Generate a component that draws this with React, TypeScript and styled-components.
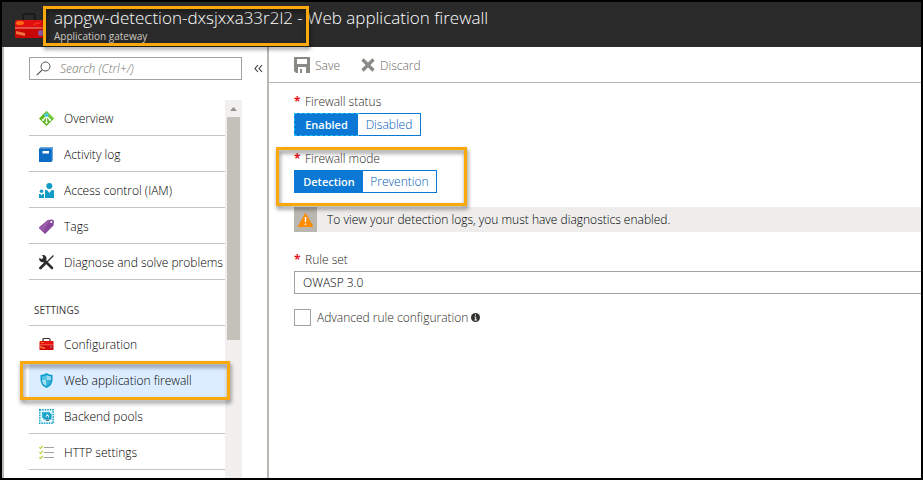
import React, { useState } from "react";
import styled, { createGlobalStyle, css } from "styled-components";

const GlobalStyle = createGlobalStyle`
  *, *::before, *::after { box-sizing: border-box; }
  body { margin: 0; background: #fff; }
  body, button, input, select {
    font-family: "Open Sans", "Noto Sans", sans-serif;
    font-size: 12px;
    font-weight: 300;
  }
`;

const Window = styled.div`
  display: flex;
  flex-direction: column;
  height: 100vh;
  border: 2px solid #000;
  background: #fff;
  color: #000;
  overflow: hidden;
`;

const Highlight = styled.div<{ $top: number; $right: number; $bottom: number; $left: number }>`
  position: absolute;
  top: ${(p) => p.$top}px;
  right: ${(p) => p.$right}px;
  bottom: ${(p) => p.$bottom}px;
  left: ${(p) => p.$left}px;
  border: 3px solid #faa80a;
  filter: drop-shadow(1px 3px 2px rgba(0, 0, 0, 0.5));
  pointer-events: none;
  z-index: 2;
`;

const Header = styled.header`
  display: flex;
  flex: none;
  gap: 10px;
  height: 45px;
  padding-left: 13px;
  background: #2a2a2a;
  color: #fff;
`;

const HeaderIcon = styled.svg`
  flex: none;
  width: 29px;
  height: 26px;
  margin-top: 10px;
`;

const Titles = styled.div`
  padding-top: 4px;
  white-space: nowrap;
`;

const Title = styled.h1`
  margin: 0;
  font-size: 17px;
  font-weight: 300;
  line-height: 24px;
`;

const ResourceName = styled.span`
  position: relative;
`;

const Subtitle = styled.p`
  margin: 0;
  color: #cbc8c0;
  font-size: 10px;
  font-weight: 400;
  line-height: 12px;
`;

const Body = styled.div`
  display: flex;
  flex: 1;
  min-height: 0;
`;

const Sidebar = styled.aside`
  display: flex;
  flex: none;
  flex-direction: column;
  width: 267px;
  border: solid #bab6b2;
  border-width: 0 2px;
  padding: 10px 0 0 25px;
`;

const SearchRow = styled.div`
  display: flex;
  align-items: center;
  gap: 12px;
  margin-bottom: 20px;
`;

const SearchBox = styled.label`
  display: flex;
  align-items: center;
  gap: 9px;
  width: 213px;
  height: 23px;
  padding-left: 6px;
  border: 1px solid #a3a19e;
`;

const SearchInput = styled.input`
  flex: 1;
  min-width: 0;
  border: 0;
  padding: 0;
  outline: 0;
  background: none;
  font-style: italic;
  &::placeholder { color: #75736c; opacity: 1; }
`;

const CollapseButton = styled.button`
  display: flex;
  border: 0;
  padding: 0;
  background: none;
`;

const NavArea = styled.div`
  display: flex;
  flex: 1;
  width: 213px;
  min-height: 0;
`;

const Nav = styled.nav`
  flex: 1;
  min-width: 0;
`;

const NavList = styled.ul`
  margin: 0;
  padding: 0;
  list-style: none;
`;

const NavItem = styled.li`
  position: relative;
`;

const NavLink = styled.a<{ $active?: boolean }>`
  display: flex;
  align-items: center;
  gap: 10px;
  height: 36px;
  padding: 2px 0 0 10px;
  border-bottom: 1px solid #c8c5bf;
  background: ${(p) => (p.$active ? "#dcedff" : "transparent")};
  color: inherit;
  text-decoration: none;
  white-space: nowrap;
  svg { flex: none; }
`;

const NavHeading = styled.h2`
  margin: 0;
  padding: 20px 0 5px 5px;
  border-bottom: 1px solid #c8c5bf;
  color: #3b3a36;
  font-size: 10px;
  font-weight: 400;
  line-height: 20px;
`;

const Scrollbar = styled.div`
  display: flex;
  flex: none;
  flex-direction: column;
  align-items: center;
  width: 17px;
  background: #f1f0ef;
`;

const ScrollArrow = styled.svg`
  flex: none;
  width: 17px;
  height: 17px;
`;

const ScrollThumb = styled.div`
  flex: 0 0 59%;
  width: 13px;
  background: #c4c1bb;
`;

const Main = styled.main`
  flex: 1;
  min-width: 0;
`;

const Toolbar = styled.div`
  display: flex;
  gap: 21px;
  height: 36px;
  padding: 1px 0 0 25px;
  border-bottom: 1px solid #b9b8ae;
`;

const ToolButton = styled.button`
  display: flex;
  align-items: center;
  gap: 5px;
  border: 0;
  padding: 0;
  background: none;
  color: #6b6963;
`;

const Form = styled.form`
  display: flex;
  flex-direction: column;
  align-items: flex-start;
  padding: 10px 0 0 25px;
`;

const Field = styled.div`
  position: relative;
  margin-bottom: 14px;
`;

const fieldLabel = css`
  display: block;
  color: #2b2924;
  line-height: 18px;
  margin-bottom: 2px;
`;

const Caption = styled.div`${fieldLabel}`;
const SelectLabel = styled.label`${fieldLabel}`;

const Star = styled.span`
  display: inline-block;
  width: 11px;
  color: #e8121c;
  font-weight: 700;
`;

const Segments = styled.div`
  display: flex;
  width: max-content;
  height: 23px;
  border: 1px solid #0a78d4;
`;

const Segment = styled.button<{ $on: boolean; $width: number; $dashed?: boolean }>`
  width: ${(p) => p.$width}px;
  border: 0;
  padding: 0;
  background: ${(p) => (p.$on ? "#0a78d4" : "#fff")};
  color: ${(p) => (p.$on ? "#fff" : "#005cb8")};
  font-size: ${(p) => (p.$on ? 11 : 12)}px;
  font-weight: ${(p) => (p.$on ? 600 : 300)};
  outline: ${(p) => (p.$dashed ? "1px dashed #1fc0f5" : "0")};
`;

const Alert = styled.div`
  display: flex;
  align-items: center;
  align-self: stretch;
  gap: 10px;
  height: 25px;
  margin-bottom: 19px;
  background: #eeedec;
`;

const AlertIcon = styled.span`
  display: flex;
  align-items: center;
  justify-content: center;
  width: 23px;
  height: 25px;
  background: #bab6b0;
`;

const SelectField = styled.div`
  align-self: stretch;
  margin-bottom: 15px;
`;

const Select = styled.select`
  display: block;
  width: 100%;
  height: 23px;
  border: 1px solid #a3a19e;
  border-right: 0;
  border-radius: 0;
  padding: 0 8px;
  background: #fff;
  color: #000;
  appearance: none;
`;

const CheckRow = styled.div`
  display: flex;
  align-items: center;
  color: #2b2924;
`;

const Checkbox = styled.input`
  width: 17px;
  height: 17px;
  margin: 0 6px 0 0;
  border: 1px solid #a3a19e;
  background: #fff;
  appearance: none;
  &:checked { background: #0a78d4; }
`;

const InfoIcon = styled.svg`
  margin-left: 3px;
`;

const Toolbox = () => (
  <svg width="15" height="15" viewBox="0 0 15 15" aria-hidden="true">
    <path d="M4 5V2.500Q4 1.500 5 1.500H10Q11 1.500 11 2.500V5" fill="none" stroke="#3a3030" strokeWidth="1.200" />
    <path d="M0.500 5Q0.500 4 1.500 4H13.500Q14.500 4 14.500 5V8H0.500Z" fill="#e8100c" />
    <path d="M0.500 8H14.500V13H0.500Z" fill="#cf0808" />
    <path d="M1 9L6 10.500V12L1 11Z" fill="#f0742f" />
    <path d="M2 5H5V6H2Z" fill="#ff7b1a" />
    <path d="M0.500 7.800H14.500" stroke="#ff9a80" strokeWidth=".6" />
    <path d="M11 9H13V11H11Z" fill="#b34b80" />
  </svg>
);

const OverviewIcon = () => (
  <svg width="15" height="15" viewBox="0 0 15 15" aria-hidden="true">
    <path d="M7.500 0L15 7.500L7.500 15L0 7.500Z" fill="#5db71f" />
    <path d="M7.500 0L15 7.500L12 9L4 3.500Z" fill="#77c93d" />
    <path d="M7.500 4V12M7.500 5L4 9M7.500 5L11 9" stroke="#fff" strokeWidth="1.200" />
    <path d="M5.800 11L7.500 13L9.200 11ZM3 8L3.200 10.200L5.400 9.500ZM12 8L11.800 10.200L9.600 9.500Z" fill="#fff" />
    <circle cx="7.500" cy="4" r="2" fill="#46c9e8" />
  </svg>
);

const LogIcon = () => (
  <svg width="15" height="15" viewBox="0 0 15 15" aria-hidden="true">
    <path d="M2 0H14V13L12 15H0V2Z" fill="#0a66b8" />
    <path d="M2 0H14V13L12.500 14V1.800H0.500Z" fill="#6fa8dc" />
    <path d="M0 1.800H12.500V15H0Z" fill="#0a6cc4" />
    <path d="M3.500 4H10V6.500H3.500Z" fill="#fff" />
  </svg>
);

const PeopleIcon = () => (
  <svg width="15" height="15" viewBox="0 0 15 15" fill="#109cc7" aria-hidden="true">
    <circle cx="10.300" cy="3" r="3" />
    <path d="M6 7H8L10.300 10L12.700 7H14Q15 7 15 8V15H6Z" />
    <circle cx="2.500" cy="8.200" r="1.800" />
    <path d="M0 11H1.500L2.500 12.500L3.500 11H5V15H0Z" />
  </svg>
);

const TagIcon = () => (
  <svg width="15" height="15" viewBox="0 0 15 15" aria-hidden="true">
    <path d="M9 1L13.500 0.500L15 2L14.500 6.500L6 15L0.500 9.500Q-.2 8.700 .5 8Z" fill="#85489a" />
    <path d="M9 1L11 .8L4 13L.5 9.500Q-.2 8.700 .5 8Z" fill="#9a5aa9" />
    <circle cx="12.300" cy="3" r="1.100" fill="#fff" />
  </svg>
);

const ToolsIcon = () => (
  <svg width="15" height="15" viewBox="0 0 15 15" aria-hidden="true">
    <path d="M14.500 .5L8 7" stroke="#2d2c2b" strokeWidth="1.200" />
    <path d="M7 7.500L1.500 13" stroke="#2d2c2b" strokeWidth="2.800" strokeLinecap="round" />
    <path d="M4.500 4.500L13 13" stroke="#2d2c2b" strokeWidth="2.500" strokeLinecap="round" />
    <path d="M3 0A3.700 3.700 0 1 1 .2 3L2.500 4L4 3.500L4.200 2Z" fill="#2d2c2b" />
  </svg>
);

const ShieldIcon = () => (
  <svg width="15" height="15" viewBox="0 0 15 15" aria-hidden="true">
    <path d="M7.500 0Q10 2 13.500 2V7Q13.500 12 7.500 15Q1.500 12 1.500 7V2Q5 2 7.500 0Z" fill="#0c9ccb" />
    <path d="M7.500 2Q5.500 3.300 3 3.500V7H7.500Z" fill="#55c4e4" />
    <path d="M7.500 2Q9.500 3.300 12 3.500V7H7.500Z" fill="#9eddf0" />
    <path d="M7.500 7H3Q3 11 7.500 13.300Z" fill="#a9dff0" />
    <path d="M7.500 7H12Q12 11 7.500 13.300Z" fill="#35b3d8" />
  </svg>
);

const PoolIcon = () => (
  <svg width="15" height="15" viewBox="0 0 15 15" aria-hidden="true">
    <rect x=".75" y=".75" width="13.500" height="13.500" fill="#e6f7fb" stroke="#169fc5" strokeWidth="1.500" strokeDasharray="1.500 1" />
    <rect x="3" y="3" width="8" height="6" fill="#35b8da" />
    <rect x="4.500" y="4.500" width="8" height="6" fill="#109cc7" />
    <path d="M7.200 8.500V6.500H9.500V8.500M7.500 5.800H9" stroke="#fff" strokeWidth=".8" fill="none" />
    <path d="M7 10.500H10V12H7Z" fill="#5a7078" />
  </svg>
);

const ChecksIcon = () => (
  <svg width="15" height="15" viewBox="0 0 15 15" fill="none" aria-hidden="true">
    <path d="M5 2.500H15M5 7.500H15M5 12.500H15" stroke="#a3a19d" strokeWidth="1.200" />
    <path d="M.3 2.300L1.500 3.500L4 1M.3 7.300L1.500 8.500L4 6M.3 12.300L1.500 13.500L4 11" stroke="#b3d334" strokeWidth="1.200" />
  </svg>
);

const generalItems = [
  { label: "Overview", Icon: OverviewIcon },
  { label: "Activity log", Icon: LogIcon },
  { label: "Access control (IAM)", Icon: PeopleIcon },
  { label: "Tags", Icon: TagIcon },
  { label: "Diagnose and solve problems", Icon: ToolsIcon },
];

const settingsItems = [
  { label: "Configuration", Icon: Toolbox },
  { label: "Web application firewall", Icon: ShieldIcon, active: true },
  { label: "Backend pools", Icon: PoolIcon },
  { label: "HTTP settings", Icon: ChecksIcon },
];

export default function App() {
  const [enabled, setEnabled] = useState(true);
  const [detection, setDetection] = useState(true);

  return (
    <Window>
      <GlobalStyle />
      <Header>
        <HeaderIcon viewBox="0 0 29 26" aria-hidden="true">
          <path d="M8 8V4Q8 2 10 2H18Q20 2 20 4V8" fill="none" stroke="#1a1a1a" strokeWidth="2" />
          <path d="M0 10Q0 8 2 8H29V15H0Z" fill="#e01010" />
          <path d="M0 15H29V26H1Q0 26 0 25Z" fill="#c90606" />
          <path d="M0 16H29" stroke="#ff9d86" strokeWidth="1" />
          <ellipse cx="5" cy="11" rx="4" ry="2" fill="#ff6a13" />
          <path d="M18 12L26 10V11L19 13Z" fill="#ff3b25" />
          <path d="M1 19L10 21V24L1 22Z" fill="#f0743a" />
          <circle cx="26" cy="21" r="3" fill="#8c58a6" />
        </HeaderIcon>
        <Titles>
          <Title>
            <ResourceName>
              appgw-detection-dxsjxxa33r2l2
              <Highlight $top={0} $right={-16} $bottom={-17} $left={-11} />
            </ResourceName>{" "}
            - Web application firewall
          </Title>
          <Subtitle>Application gateway</Subtitle>
        </Titles>
      </Header>
      <Body>
        <Sidebar>
          <SearchRow>
            <SearchBox>
              <svg width="15" height="15" viewBox="0 0 15 15" fill="none" stroke="#55534e" aria-hidden="true">
                <circle cx="9.500" cy="5.500" r="4.500" />
                <path d="M6.200 8.800L.8 14.200" strokeWidth="1.200" />
              </svg>
              <SearchInput type="search" placeholder="Search (Ctrl+/)" aria-label="Search" />
            </SearchBox>
            <CollapseButton type="button" aria-label="Collapse menu">
              <svg width="9" height="9" viewBox="0 0 9 9" fill="none" stroke="#33322f" strokeWidth="1.100">
                <path d="M4 1L1 4.500L4 8M8 1L5 4.500L8 8" />
              </svg>
            </CollapseButton>
          </SearchRow>
          <NavArea>
            <Nav>
              <NavList>
                {generalItems.map(({ label, Icon }) => (
                  <NavItem key={label}>
                    <NavLink href="#"><Icon />{label}</NavLink>
                  </NavItem>
                ))}
              </NavList>
              <NavHeading>SETTINGS</NavHeading>
              <NavList>
                {settingsItems.map(({ label, Icon, active }) => (
                  <NavItem key={label}>
                    <NavLink href="#" $active={active} aria-current={active ? "page" : undefined}><Icon />{label}</NavLink>
                    {active && <Highlight $top={-1} $right={-5} $bottom={-2} $left={-9} />}
                  </NavItem>
                ))}
              </NavList>
            </Nav>
            <Scrollbar aria-hidden="true">
              <ScrollArrow viewBox="0 0 17 17"><path d="M5 11L8.500 7L12 11Z" fill="#97948f" /></ScrollArrow>
              <ScrollThumb />
            </Scrollbar>
          </NavArea>
        </Sidebar>
        <Main>
          <Toolbar>
            <ToolButton type="button">
              <svg width="16" height="16" viewBox="0 0 16 16" aria-hidden="true">
                <path fillRule="evenodd" d="M0 0H16V16H2L0 14ZM3 2V7H13V2ZM4 10V16H6V12H8V16H12V10Z" fill="#8b8984" />
              </svg>
              Save
            </ToolButton>
            <ToolButton type="button">
              <svg width="14" height="14" viewBox="0 0 14 14" aria-hidden="true">
                <path d="M1.500 1.500L12.500 12.500M12.500 1.500L1.500 12.500" stroke="#8b8984" strokeWidth="3.200" />
              </svg>
              Discard
            </ToolButton>
          </Toolbar>
          <Form>
            <Field role="group" aria-labelledby="status-label">
              <Caption id="status-label"><Star>*</Star>Firewall status</Caption>
              <Segments>
                <Segment type="button" $width={63} $on={enabled} $dashed={enabled} aria-pressed={enabled} onClick={() => setEnabled(true)}>Enabled</Segment>
                <Segment type="button" $width={62} $on={!enabled} aria-pressed={!enabled} onClick={() => setEnabled(false)}>Disabled</Segment>
              </Segments>
            </Field>
            <Field role="group" aria-labelledby="mode-label">
              <Caption id="mode-label"><Star>*</Star>Firewall mode</Caption>
              <Segments>
                <Segment type="button" $width={68} $on={detection} aria-pressed={detection} onClick={() => setDetection(true)}>Detection</Segment>
                <Segment type="button" $width={73} $on={!detection} aria-pressed={!detection} onClick={() => setDetection(false)}>Prevention</Segment>
              </Segments>
              <Highlight $top={-3} $right={-30} $bottom={-13} $left={-18} />
            </Field>
            <Alert role="status">
              <AlertIcon>
                <svg width="15" height="14" viewBox="0 0 15 14" aria-hidden="true">
                  <path d="M7.500 .5L14.800 13.500H.2Z" fill="#ff8c00" stroke="#ff8c00" strokeLinejoin="round" />
                  <path d="M7.500 4V9M7.500 10.500V12" stroke="#fff" strokeWidth="1.500" />
                </svg>
              </AlertIcon>
              To view your detection logs, you must have diagnostics enabled.
            </Alert>
            <SelectField>
              <SelectLabel htmlFor="rule-set"><Star>*</Star>Rule set</SelectLabel>
              <Select id="rule-set"><option>OWASP 3.0</option></Select>
            </SelectField>
            <CheckRow>
              <Checkbox id="advanced" type="checkbox" />
              <label htmlFor="advanced">Advanced rule configuration</label>
              <InfoIcon width="9" height="9" viewBox="0 0 9 9" role="img" aria-label="Information">
                <circle cx="4.500" cy="4.500" r="4.500" fill="#33322f" />
                <path d="M4.500 1.300V2.600M3.500 4H4.700V7M3.300 7H5.900" stroke="#fff" fill="none" />
              </InfoIcon>
            </CheckRow>
          </Form>
        </Main>
      </Body>
    </Window>
  );
}
